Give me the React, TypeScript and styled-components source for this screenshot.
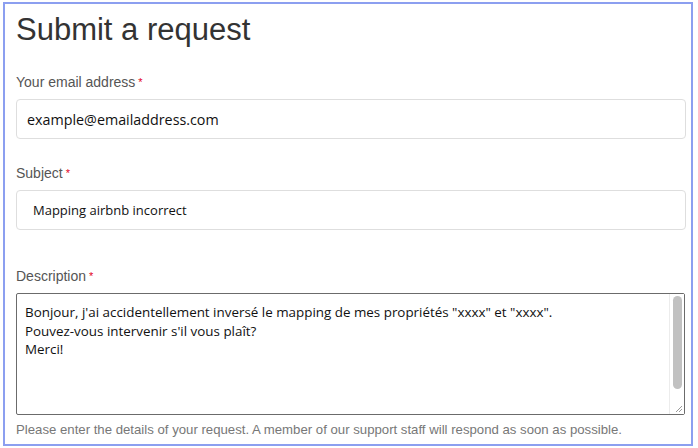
import styled, { createGlobalStyle } from 'styled-components';

const GlobalStyle = createGlobalStyle`
  html, body {
    margin: 0;
    padding: 0;
    background: #ffffff;
  }
  body {
    font-family: 'Liberation Sans', Arial, sans-serif;
  }
`;

const Frame = styled.div`
  box-sizing: border-box;
  margin: 2px 0 0 3px;
  width: 690px;
  height: 444px;
  border: 2px solid #8c9ff0;
  padding: 6px 6px 0 11px;
  display: flex;
  flex-direction: column;
`;

const Title = styled.h1`
  margin: 0;
  font-family: 'Liberation Sans', Arial, sans-serif;
  font-weight: 400;
  font-size: 31px;
  line-height: 40px;
  color: #333333;
`;

const Field = styled.div<{ gap: number }>`
  display: flex;
  flex-direction: column;
  margin-top: ${({ gap }) => gap}px;
`;

const Label = styled.label`
  font-size: 14px;
  line-height: 18px;
  color: #555555;
  margin-bottom: 8px;
`;

const Star = styled.span`
  color: #e3001b;
  font-size: 11px;
  margin-left: 3px;
  vertical-align: top;
`;

const Input = styled.div<{ indent: number; size: number }>`
  box-sizing: border-box;
  height: 40px;
  width: 670px;
  border: 1px solid #dedede;
  border-radius: 4px;
  display: flex;
  align-items: center;
  padding-left: ${({ indent }) => indent}px;
  font-family: 'Open Sans', 'Noto Sans', sans-serif;
  font-size: ${({ size }) => size}px;
  color: #111111;
`;

const TextArea = styled.div`
  box-sizing: border-box;
  position: relative;
  height: 122px;
  width: 669px;
  border: 1px solid #6b6b6b;
  border-radius: 2px;
  padding: 9px 24px 0 8px;
  font-family: 'Open Sans', 'Noto Sans', sans-serif;
  font-size: 13.4px;
  line-height: 18.5px;
  color: #111111;
`;

const Line = styled.div`
  white-space: pre;
`;

const ScrollTrack = styled.div`
  position: absolute;
  top: 0;
  right: 0;
  bottom: 0;
  width: 14px;
  border-left: 1px solid #ececec;
  background: #ffffff;
`;

const Thumb = styled.div`
  position: absolute;
  top: 2px;
  left: 3px;
  width: 9px;
  height: 93px;
  border-radius: 5px;
  background: #c1c1c1;
`;

const Grip = styled.svg`
  position: absolute;
  right: 1px;
  bottom: 1px;
`;

const Help = styled.p`
  margin: 7px 0 0;
  font-size: 13.2px;
  line-height: 16px;
  color: #777777;
  white-space: nowrap;
`;

export default function App() {
  return (
    <>
      <GlobalStyle />
      <Frame>
        <Title>Submit a request</Title>

        <Field gap={23}>
          <Label>
            Your email address<Star>*</Star>
          </Label>
          <Input indent={10} size={14.3}>
            example@emailaddress.com
          </Input>
        </Field>

        <Field gap={25}>
          <Label>
            Subject<Star>*</Star>
          </Label>
          <Input indent={16} size={13}>
            Mapping airbnb incorrect
          </Input>
        </Field>

        <Field gap={37}>
          <Label>
            Description<Star>*</Star>
          </Label>
          <TextArea>
            <Line>
              Bonjour, j'ai accidentellement inversé le mapping de mes propriétés "xxxx" et "xxxx".
            </Line>
            <Line>Pouvez-vous intervenir s'il vous plaît?</Line>
            <Line>Merci!</Line>
            <ScrollTrack>
              <Thumb />
              <Grip width="10" height="10" viewBox="0 0 10 10">
                <path d="M9 3 L3 9 M9 6 L6 9" stroke="#9a9a9a" strokeWidth="1" />
              </Grip>
            </ScrollTrack>
          </TextArea>
        </Field>

        <Help>
          Please enter the details of your request. A member of our support staff will respond as soon as possible.
        </Help>
      </Frame>
    </>
  );
}
